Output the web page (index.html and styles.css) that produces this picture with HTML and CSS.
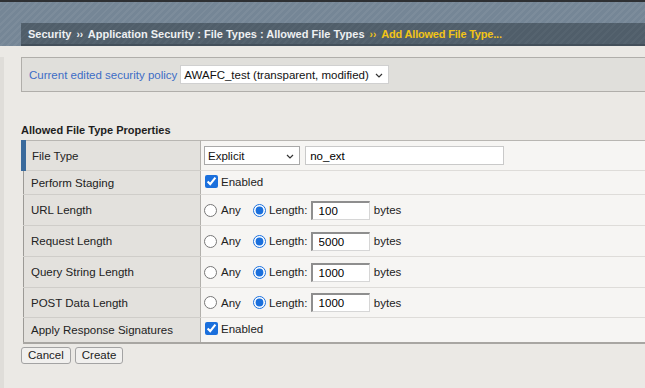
FILE: index.html
```html
<!DOCTYPE html>
<html lang="en">

<head>
    <meta charset="UTF-8">
    <title>Add Allowed File Type</title>
    <link rel="stylesheet" href="styles.css">
</head>

<body>
    <div class="masthead">
        <div class="crumbs">
            <span>Security</span>
            <span class="sep">&rsaquo;&rsaquo;</span>
            <span>Application Security : File Types : Allowed File Types</span>
            <span class="sep sep-current">&rsaquo;&rsaquo;</span>
            <span class="current">Add Allowed File Type...</span>
        </div>
    </div>

    <div class="page">
        <div class="policy-bar">
            <label class="policy-label">Current edited security policy</label>
            <span class="select-wrap">
                <select class="policy-select">
                    <option>AWAFC_test (transparent, modified)</option>
                </select>
                <svg class="chevron" width="8" height="5" viewBox="0 0 8 5"><path d="M1 1 L4 4 L7 1" fill="none" stroke="#333" stroke-width="1.2"/></svg>
            </span>
        </div>

        <h3 class="section-title">Allowed File Type Properties</h3>

        <table class="props">
            <tr class="row-mid">
                <td class="label required">File Type</td>
                <td class="value">
                    <span class="select-wrap">
                        <select class="type-select">
                            <option>Explicit</option>
                            <option>Wildcard</option>
                        </select>
                        <svg class="chevron" width="8" height="5" viewBox="0 0 8 5"><path d="M1 1 L4 4 L7 1" fill="none" stroke="#333" stroke-width="1.2"/></svg>
                    </span>
                    <input class="type-name" type="text" value="no_ext">
                </td>
            </tr>
            <tr class="row-check">
                <td class="label">Perform Staging</td>
                <td class="value">
                    <label class="check"><input type="checkbox" checked>Enabled</label>
                </td>
            </tr>
            <tr class="row-tall">
                <td class="label">URL Length</td>
                <td class="value">
                    <label class="opt"><input type="radio" name="url">Any</label>
                    <label class="opt"><input type="radio" name="url" checked>Length:</label>
                    <input class="len" type="text" value="100">
                    <span class="unit">bytes</span>
                </td>
            </tr>
            <tr class="row-tall">
                <td class="label">Request Length</td>
                <td class="value">
                    <label class="opt"><input type="radio" name="req">Any</label>
                    <label class="opt"><input type="radio" name="req" checked>Length:</label>
                    <input class="len" type="text" value="5000">
                    <span class="unit">bytes</span>
                </td>
            </tr>
            <tr class="row-tall">
                <td class="label">Query String Length</td>
                <td class="value">
                    <label class="opt"><input type="radio" name="qs">Any</label>
                    <label class="opt"><input type="radio" name="qs" checked>Length:</label>
                    <input class="len" type="text" value="1000">
                    <span class="unit">bytes</span>
                </td>
            </tr>
            <tr class="row-mid">
                <td class="label">POST Data Length</td>
                <td class="value">
                    <label class="opt"><input type="radio" name="post">Any</label>
                    <label class="opt"><input type="radio" name="post" checked>Length:</label>
                    <input class="len" type="text" value="1000">
                    <span class="unit">bytes</span>
                </td>
            </tr>
            <tr class="row-last">
                <td class="label">Apply Response Signatures</td>
                <td class="value">
                    <label class="check"><input type="checkbox" checked>Enabled</label>
                </td>
            </tr>
        </table>

        <div class="actions">
            <button type="button" class="btn">Cancel</button>
            <button type="button" class="btn">Create</button>
        </div>
    </div>
</body>

</html>
```

FILE: styles.css
```css
/* global */
body {
    font-family: "Liberation Sans", Arial, sans-serif;
    font-size: 11.5px;
    color: #222;
    background-color: #ebe9e5;
    margin: 0;
    padding: 0;
    height: 388px;
    overflow: hidden;
}

/* header strip */
.masthead {
    border-top: 2px solid #2e3033;
    padding: 21px 0 0 21px;
    background-color: #758696;
    background-image: repeating-linear-gradient(135deg, rgba(255, 255, 255, 0.05) 0 2px, rgba(0, 0, 0, 0) 2px 5px);
}

.crumbs {
    height: 21px;
    line-height: 22px;
    padding-left: 7px;
    border-bottom: 2px solid #434f5a;
    background-color: #505e6a;
    background-image: repeating-linear-gradient(135deg, rgba(255, 255, 255, 0.03) 0 2px, rgba(0, 0, 0, 0) 2px 5px);
    color: #eef0f2;
    font-size: 11px;
    font-weight: bold;
    white-space: nowrap;
}

.crumbs .sep {
    font-size: 10px;
    margin: 0 2px;
}

.crumbs .current,
.crumbs .sep-current {
    color: #f2c417;
}

.crumbs .current {
    letter-spacing: -0.2px;
}

/* page body */
.page {
    border-left: 4px solid #dfddd9;
    padding-left: 17px;
    height: 340px;
}

.policy-bar {
    margin-top: 11px;
    height: 33px;
    border: 1px solid #b0aeaa;
    border-right: none;
    background-color: #e0dfdb;
    display: flex;
    align-items: center;
    padding-left: 7px;
}

.policy-label {
    color: #3d6dc6;
    margin-right: 3px;
}

/* selects with a drawn chevron */
.select-wrap {
    position: relative;
    display: inline-block;
    vertical-align: middle;
}

.select-wrap select {
    appearance: none;
    -webkit-appearance: none;
    font-family: inherit;
    font-size: 11.5px;
    color: #111;
    background-color: #fff;
    box-sizing: border-box;
    height: 19px;
    padding: 0 18px 0 3px;
    margin: 0;
    border-radius: 0;
    display: block;
}

.select-wrap .chevron {
    position: absolute;
    right: 6px;
    top: 8px;
    pointer-events: none;
}

.policy-select {
    width: 209px;
    border: 1px solid #d0d0d0;
}

.type-select {
    width: 96px;
    border: 1px solid #a9a9a9;
}

.section-title {
    font-size: 11px;
    font-weight: bold;
    line-height: 14px;
    margin: 31px 0 3px 0;
    color: #1e1e1e;
}

/* properties table */
.props {
    width: 100%;
    table-layout: fixed;
    border-collapse: collapse;
    border-left: 1px solid #9c9a96;
    border-top: 1px solid #b8b6b2;
    border-bottom: 2px solid #a8a6a2;
}

.props td {
    box-sizing: border-box;
    padding: 0 3px;
    vertical-align: middle;
}

.props .label {
    width: 177px;
    padding-left: 7px;
    background-color: #e3e1dd;
    border-right: 1px solid #b2b0ac;
    border-bottom: 1px solid #cfcdc9;
}

.props .label.required {
    border-left: 5px solid #3a6a9c;
    padding-left: 6px;
}

.props .value {
    background-color: #f6f5f3;
    border-bottom: 1px solid #dedcd9;
    white-space: nowrap;
}

.row-tall td {
    height: 31px;
}

.row-mid td {
    height: 30px;
}

.row-check td {
    height: 24px;
}

.row-last td {
    height: 25px;
    border-bottom: none;
}

.type-name {
    font-family: inherit;
    font-size: 11.5px;
    box-sizing: border-box;
    width: 199px;
    height: 19px;
    padding: 0 4px;
    margin-left: 2px;
    border: 1px solid #c9c9c9;
    vertical-align: middle;
}

.check {
    display: inline-flex;
    align-items: center;
}

.check input {
    width: 13px;
    height: 13px;
    margin: 0 3px 0 1px;
    accent-color: #1a6fdc;
}

.opt {
    display: inline-flex;
    align-items: center;
    vertical-align: middle;
}

.opt input {
    width: 13px;
    height: 13px;
    margin: 0 4px 0 0;
    accent-color: #1a6fdc;
}

.opt + .opt {
    margin-left: 9px;
}

.opt + .opt input {
    margin-right: 3px;
}

.len {
    font-family: inherit;
    font-size: 11.5px;
    box-sizing: border-box;
    width: 59px;
    height: 19px;
    padding: 0 4px 0 6px;
    margin-left: 0;
    border: 1px solid #d6d6d6;
    border-top: 2px solid #8e8e8e;
    border-left: 2px solid #8e8e8e;
    vertical-align: middle;
}

.unit {
    margin-left: 1px;
    vertical-align: middle;
}

/* buttons */
.actions {
    margin-top: 3px;
    display: flex;
    gap: 4px;
}

.btn {
    font-family: inherit;
    font-size: 11.5px;
    height: 17px;
    padding: 0 6px;
    border: 1px solid #a3a3a3;
    border-radius: 3px;
    background-color: #f1f0ee;
    color: #222;
    line-height: 15px;
}
```
